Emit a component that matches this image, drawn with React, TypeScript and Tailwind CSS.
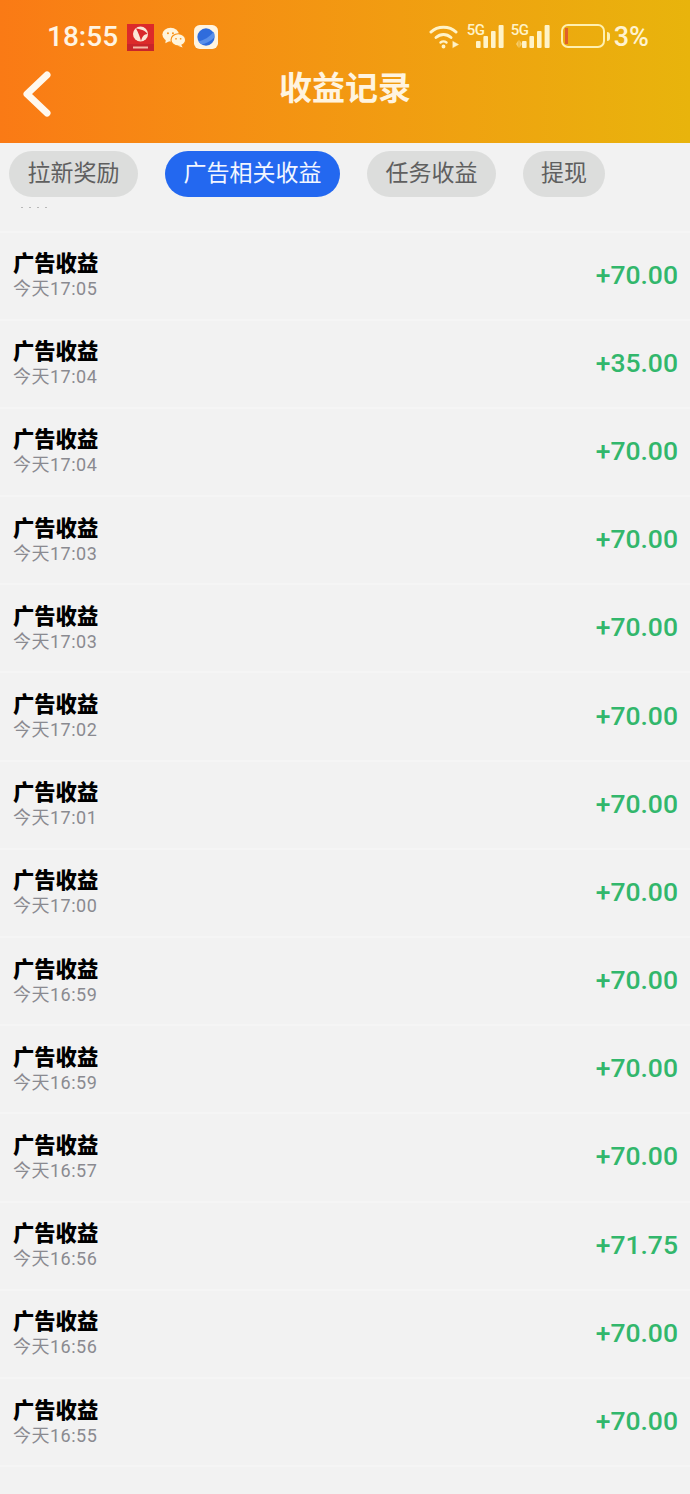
const cjk = { fontFamily: 'Roboto, "Noto Sans CJK SC", sans-serif' }
const roboto = { fontFamily: 'Roboto, sans-serif' }

const tabs = [
  { label: '拉新奖励', active: false, width: 'w-[129px]' },
  { label: '广告相关收益', active: true, width: 'w-[175px]' },
  { label: '任务收益', active: false, width: 'w-[129px]' },
  { label: '提现', active: false, width: 'w-[82px]' },
]

const rows = [
  ['17:05', '+70.00'],
  ['17:04', '+35.00'],
  ['17:04', '+70.00'],
  ['17:03', '+70.00'],
  ['17:03', '+70.00'],
  ['17:02', '+70.00'],
  ['17:01', '+70.00'],
  ['17:00', '+70.00'],
  ['16:59', '+70.00'],
  ['16:59', '+70.00'],
  ['16:57', '+70.00'],
  ['16:56', '+71.75'],
  ['16:56', '+70.00'],
  ['16:55', '+70.00'],
]

function Bars() {
  return (
    <svg width="28" height="23" viewBox="0 0 28 23" fill="#fff3c8">
      <rect x="0" y="16" width="4.6" height="7" rx="1" />
      <rect x="7.4" y="11" width="4.6" height="12" rx="1" />
      <rect x="15" y="6" width="4.6" height="17" rx="1" />
      <rect x="22.6" y="0" width="5" height="23" rx="1" />
    </svg>
  )
}

function StatusBar() {
  return (
    <div className="flex h-[75px] items-start justify-between pl-[47px] pr-[41px] pt-[22px]">
      <div className="flex items-center">
        <span className="w-[72px] text-[28px] font-medium leading-[30px] text-[#fff4e2]" style={roboto}>
          18:55
        </span>
        <svg className="ml-[8px]" width="27" height="27" viewBox="0 0 27 27">
          <rect width="27" height="27" fill="#dc2a2a" />
          <rect y="20" width="27" height="7" fill="#c8242a" />
          <circle cx="13.5" cy="10" r="7.5" fill="#fbe6d6" />
          <path d="M9 4.5 C14 5 19 7 20.5 10 C17 10.5 15.5 12 14 17 C13 13 11.5 9 9 4.5 Z" fill="#d8282c" />
          <rect x="6" y="22.5" width="15" height="2" fill="#f4b8a4" />
        </svg>
        <svg className="ml-[8px]" width="24" height="21" viewBox="0 0 25 21" fill="#fff4dc">
          <ellipse cx="9" cy="7.5" rx="8.6" ry="7.2" />
          <path d="M4 12 L3.5 16.5 L8.5 14 Z" />
          <ellipse cx="17" cy="13" rx="7.6" ry="6.4" stroke="#f98f14" strokeWidth="1.2" />
          <path d="M20 18 L21.5 20.8 L16.5 19.2 Z" />
          <circle cx="6.2" cy="6" r="1" fill="#f98f14" />
          <circle cx="11.4" cy="6" r="1" fill="#f98f14" />
          <circle cx="14.6" cy="11.8" r="0.9" fill="#f98f14" />
          <circle cx="19.4" cy="11.8" r="0.9" fill="#f98f14" />
        </svg>
        <svg className="ml-[8px]" width="24" height="24" viewBox="0 0 25 25">
          <rect width="25" height="25" rx="6" fill="#fff4e0" />
          <circle cx="12.5" cy="12.5" r="9" fill="#2f6cdc" />
          <path d="M4.5 17 C10 16.5 16.5 12 20.5 7 C21.5 9 21.5 11 21 13 C17 17 12 20 7.5 20 C6.2 19.2 5.2 18.2 4.5 17 Z" fill="#5a90ea" />
        </svg>
      </div>
      <div className="flex items-start">
        <svg className="mt-[2px]" width="31" height="25" viewBox="0 0 31 25" fill="none" stroke="#fff3c8" strokeWidth="3" strokeLinecap="round">
          <path d="M2 8 C8.5 1.5 20.5 1.5 27 8" />
          <path d="M7 13.5 C11.5 9.5 17.5 9.5 22 13.5" />
          <path d="M11.5 18.5 C13.5 17 15.5 17 17.5 18.5" strokeWidth="2.4" />
          <circle cx="14.5" cy="22.5" r="1.2" fill="#fff3c8" strokeWidth="1.5" />
          <path d="M24 17.5 L29.5 20.5 L24 23.5 Z" fill="#fff3c8" strokeWidth="0.5" />
        </svg>
        <div className="relative ml-[7px] h-[26px] w-[37px]">
          <span className="absolute left-0 top-0 text-[15px] font-medium leading-[16px] tracking-[-0.5px] text-[#fff3c8]" style={roboto}>
            5G
          </span>
          <div className="absolute bottom-0 right-0 flex">
            <Bars />
          </div>
        </div>
        <div className="relative ml-[7px] h-[26px] w-[39px]">
          <span className="absolute left-0 top-0 text-[15px] font-medium leading-[16px] tracking-[-0.5px] text-[#fff3c8]" style={roboto}>
            5G
          </span>
          <svg className="absolute bottom-0 left-[5px] opacity-50" width="6" height="8" viewBox="0 0 6 8" fill="#fff3c8">
            <path d="M2.6 0 L0 4 L2.6 8 Z" />
            <path d="M3.4 0 L6 4 L3.4 8 Z" />
          </svg>
          <div className="absolute bottom-0 right-0 flex">
            <Bars />
          </div>
        </div>
        <div className="ml-[11px] mt-[2px] flex items-center">
          <div className="h-[24px] w-[44px] rounded-[7px] border-[2.5px] border-[#fff0b0] p-[2px]">
            <div className="h-full w-[3px] bg-[#e0602a]" />
          </div>
          <div className="ml-[2px] h-[9px] w-[3px] rounded-r bg-[#fff0b0]" />
        </div>
        <span className="ml-[4px] text-[27px] font-medium leading-[30px] text-[#fff3d0]" style={roboto}>
          3%
        </span>
      </div>
    </div>
  )
}

function Header() {
  return (
    <header className="h-[143px] bg-gradient-to-r from-[#fa7a15] to-[#e8b40c]">
      <StatusBar />
      <div className="relative flex h-[30px] items-center justify-center">
        <svg className="absolute left-[21px] top-[-4px]" width="32" height="46" viewBox="0 0 32 46" fill="none" stroke="#fff8ee" strokeWidth="7" strokeLinecap="round" strokeLinejoin="round">
          <path d="M26 4 L6 23 L26 42" />
        </svg>
        <h1 className="mb-[3px] text-[33px] font-bold leading-[30px] text-[#fff4e0]" style={cjk}>
          收益记录
        </h1>
      </div>
    </header>
  )
}

function Tabs() {
  return (
    <nav className="flex h-[64px] gap-[27px] pl-[9px] pt-[8px]">
      {tabs.map(t => (
        <div
          key={t.label}
          className={`flex h-[46px] items-center justify-center rounded-full text-[23px] leading-[30px] ${t.width} ${
            t.active ? 'bg-[#2368f0] text-[#f2f6ff]' : 'bg-[#dcdddc] text-[#5f5f5f]'
          }`}
          style={cjk}
        >
          {t.label}
        </div>
      ))}
    </nav>
  )
}

function Row({ time, amount }: { time: string; amount: string }) {
  return (
    <div className="flex h-[88.2px] items-center justify-between border-b-2 border-[#f5f5f5] pb-[2px] pl-[13px] pr-[12px]">
      <div className="mt-[4px]">
        <div className="text-[21.3px] font-black leading-[25px] text-black" style={cjk}>
          广告收益
        </div>
        <div className="text-[18px] leading-[26px] tracking-[0.5px] text-[#8a8a90]" style={cjk}>
          今天{time}
        </div>
      </div>
      <div className="text-[26.5px] font-medium leading-[30px] text-[#32b76c]" style={roboto}>
        {amount}
      </div>
    </div>
  )
}

export default function App() {
  return (
    <div className="h-[1494px] w-[690px] overflow-hidden bg-[#f2f2f2]">
      <Header />
      <Tabs />
      {/* bottom of the row scrolled under the tabs */}
      <div className="flex h-[25.5px] items-start gap-[6px] border-b-2 border-[#f5f5f5] pl-[21px]">
        <span className="h-[1px] w-[2px] bg-[#b8b8b8]" />
        <span className="h-[1px] w-[2px] bg-[#b8b8b8]" />
        <span className="h-[1px] w-[2px] bg-[#b8b8b8]" />
        <span className="h-[1px] w-[2px] bg-[#b8b8b8]" />
      </div>
      {rows.map((r, i) => (
        <Row key={i} time={r[0]} amount={r[1]} />
      ))}
    </div>
  )
}
